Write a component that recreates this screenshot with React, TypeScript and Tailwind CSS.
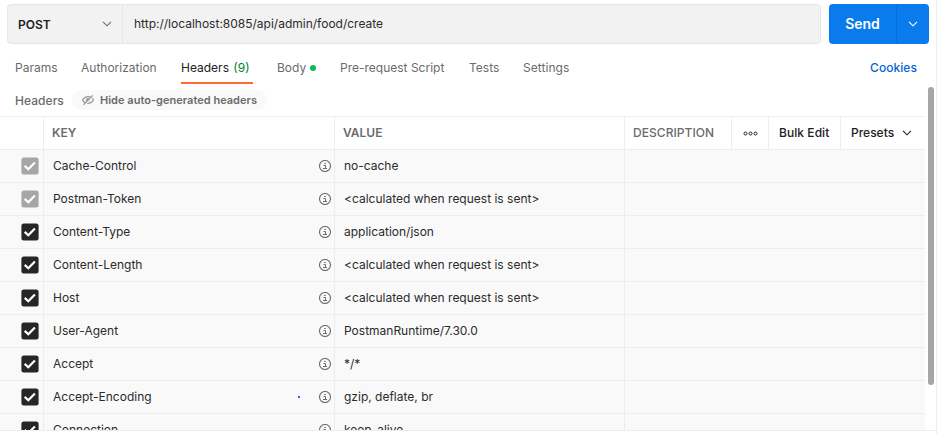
import React from "react";

const rows = [
  { key: "Cache-Control", value: "no-cache", locked: true },
  { key: "Postman-Token", value: "<calculated when request is sent>", locked: true },
  { key: "Content-Type", value: "application/json" },
  { key: "Content-Length", value: "<calculated when request is sent>" },
  { key: "Host", value: "<calculated when request is sent>" },
  { key: "User-Agent", value: "PostmanRuntime/7.30.0" },
  { key: "Accept", value: "*/*" },
  { key: "Accept-Encoding", value: "gzip, deflate, br", marked: true },
  { key: "Connection", value: "keep-alive" },
];

function Chevron({ className }: { className: string }) {
  return (
    <svg width="10" height="6" viewBox="0 0 10 6" fill="none" className={className}>
      <path d="M1 0.8L5 4.8L9 0.8" stroke="currentColor" strokeWidth="1.1" />
    </svg>
  );
}

function Check({ locked }: { locked?: boolean }) {
  return (
    <svg width="18" height="18" viewBox="0 0 18 18" fill="none">
      <rect x="0.4" y="0.4" width="17.2" height="17.2" rx="2.5" fill={locked ? "#a6a6a6" : "#262626"} />
      <path d="M3.7 8.9L7.3 12.2L13.9 5.4" stroke="#fff" strokeWidth="2.2" />
    </svg>
  );
}

function Info() {
  return (
    <svg width="12" height="12" viewBox="0 0 12 12" fill="none" stroke="#6b6b6b">
      <circle cx="6" cy="6" r="5.5" strokeWidth="1.1" />
      <path d="M4.5 5.5H6.5V8.5M4 8.5H8M5.2 3.5H6.8" />
    </svg>
  );
}

function EyeOff() {
  return (
    <svg width="12" height="12" viewBox="0 0 12 12" fill="none" stroke="#999">
      <path d="M0.6 6C1.8 3.7 3.8 2.6 6 2.6S10.2 3.7 11.4 6C10.2 8.3 8.2 9.4 6 9.4S1.8 8.3 0.6 6Z" strokeWidth="1.3" />
      <circle cx="6" cy="6" r="2.3" fill="#a6a6a6" stroke="none" />
      <path d="M2.6 11.2L11.6 2.2" stroke="#f9f9f9" strokeWidth="1.2" />
      <path d="M1.4 10.9L10.8 1.4" strokeWidth="1.3" />
    </svg>
  );
}

export default function App() {
  return (
    <div className="flex h-[434px] w-[946px] overflow-hidden bg-white font-['Inter',sans-serif] text-[12px] leading-4 text-[#2b2b2b]">
      <main className="flex w-[937px] flex-col border-r border-[#ededed]">
        <div className="flex h-11 shrink-0 gap-2 pt-1 pl-[7px]">
          <div className="flex h-10 w-[814px] rounded-[4px] border border-[#e6e6e6] bg-[#f2f2f2]">
            <div className="flex w-[115px] items-center justify-between border-r border-[#e6e6e6] pr-[10px] pl-[10px]">
              <span className="pt-px font-semibold text-[#212121]">POST</span>
              <Chevron className="text-[#6b6b6b]" />
            </div>
            <span className="self-center pl-[11px]">http://localhost:8085/api/admin/food/create</span>
          </div>
          <div className="flex h-10 w-[100px] rounded-[4px] bg-[#097bed] text-white">
            <span className="flex w-[68px] items-center justify-center border-r border-[#086fd6] text-[14px] font-semibold">Send</span>
            <span className="flex flex-1 items-center justify-center">
              <Chevron className="text-white" />
            </span>
          </div>
        </div>

        <nav className="flex h-10 shrink-0 items-start pl-[15px] text-[#6b6b6b]">
          <span className="w-[66px] pt-4">Params</span>
          <span className="w-[100px] pt-4">Authorization</span>
          <span className="h-10 w-[72px] border-b-2 border-[#ff6c37] pt-4 whitespace-nowrap text-[#212121]">
            Headers <span className="ml-px text-[#007f31]">(9)</span>
          </span>
          <span className="ml-6 flex w-[63px] items-center gap-1 pt-4">
            Body <i className="size-[6px] rounded-full bg-[#0cbb52]" />
          </span>
          <span className="w-[129px] pt-4">Pre-request Script</span>
          <span className="w-[54px] pt-4">Tests</span>
          <span className="pt-4 tracking-[0.05px]">Settings</span>
          <span className="mr-[19px] ml-auto pt-4 font-medium tracking-[0.05px] text-[#0265d2]">Cookies</span>
        </nav>

        <div className="flex min-h-0 flex-1 border-b border-[#ededed]">
          <section className="flex w-[925px] flex-col overflow-hidden">
            <div className="flex h-8 shrink-0 items-center pl-[15px] font-medium text-[#6b6b6b]">
              <span className="w-[57px] pt-[2px] tracking-[0.05px]">Headers</span>
              <span className="flex h-5 w-[195px] items-center gap-[6px] rounded-full bg-[#f9f9f9] pl-[10px] text-[11px] font-semibold tracking-[0.02px] whitespace-nowrap">
                <EyeOff />
                Hide auto-generated headers
              </span>
            </div>

            <div className="flex h-[34px] shrink-0 border-y border-[#ededed] font-semibold text-[#6b6b6b] [&>div]:flex [&>div]:items-center">
              <div className="w-11 border-r border-[#ededed]" />
              <div className="w-[291px] border-r border-[#ededed] pl-2">KEY</div>
              <div className="w-[290px] border-r border-[#ededed] pl-2">VALUE</div>
              <div className="w-[107px] border-r border-[#ededed] pl-2 font-medium tracking-[0.06px]">DESCRIPTION</div>
              <div className="w-[37px] justify-center border-r border-[#ededed]">
                <svg width="15" height="5" viewBox="0 0 15 5" fill="none" stroke="#212121">
                  <circle cx="2.5" cy="2.5" r="1.5" />
                  <circle cx="7.5" cy="2.5" r="1.5" />
                  <circle cx="12.5" cy="2.5" r="1.5" />
                </svg>
              </div>
              <div className="w-[72px] border-r border-[#ededed] pl-[10px] font-medium tracking-[0.06px] text-[#212121]">Bulk Edit</div>
              <div className="flex-1 justify-between pr-[13px] pl-[10px] font-medium text-[#212121]">
                Presets
                <Chevron className="text-[#212121]" />
              </div>
            </div>

            {rows.map((row) => (
              <div key={row.key} className="flex h-[33px] shrink-0 border-b border-[#ededed] bg-[#f9f9f9] [&>div]:flex [&>div]:items-center">
                <div className="w-11 border-r border-[#ededed] pl-[21px]">
                  <Check locked={row.locked} />
                </div>
                <div className="w-[291px] border-r border-[#ededed] pr-[3px] pl-[9px]">
                  {row.key}
                  {row.marked && <i className="ml-auto size-[2px] rounded-full bg-[#1a10f0]" />}
                  <span className={row.marked ? "ml-[19px]" : "ml-auto"}>
                    <Info />
                  </span>
                </div>
                <div className="w-[290px] border-r border-[#ededed] pl-[9px]">{row.value}</div>
                <div className="flex-1" />
              </div>
            ))}
          </section>
          <div className="mt-[3px] ml-[3px] h-[298px] w-[6px] rounded-full bg-[#a6a6a6]" />
        </div>
        <div className="h-[3px] shrink-0" />
      </main>
    </div>
  );
}
